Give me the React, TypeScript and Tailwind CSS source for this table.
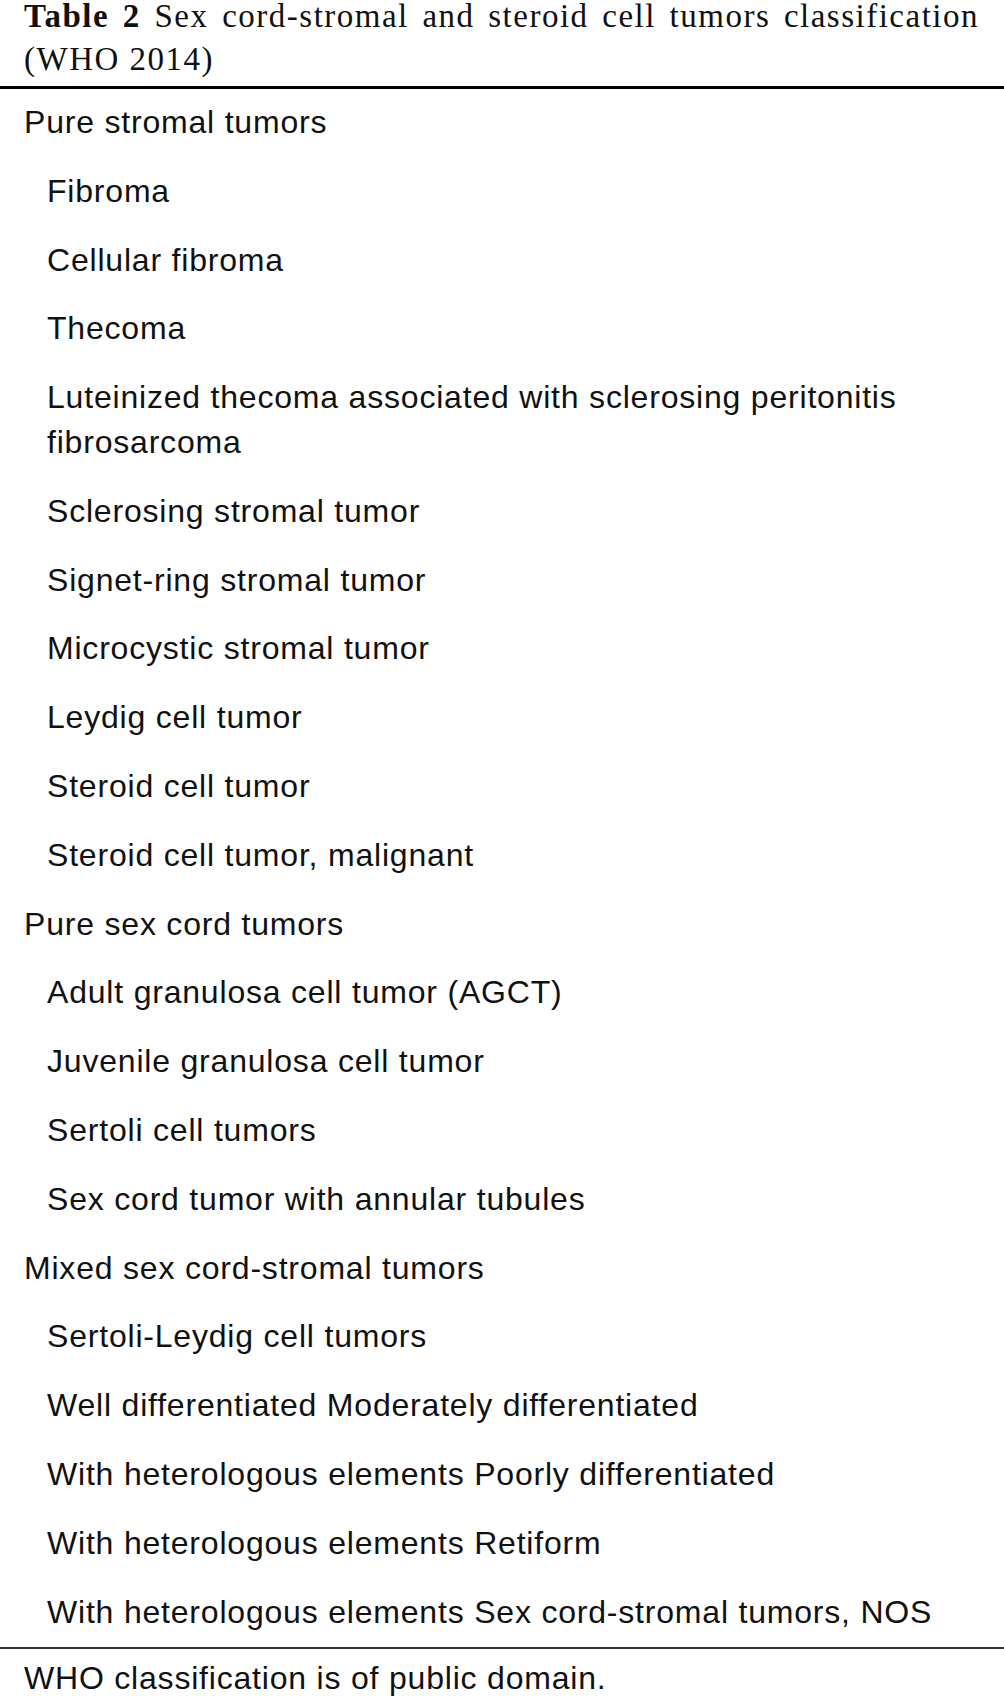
import React from "react";

type Row = { text: string; level: 0 | 1 };

const rows: Row[] = [
  { text: "Pure stromal tumors", level: 0 },
  { text: "Fibroma", level: 1 },
  { text: "Cellular fibroma", level: 1 },
  { text: "Thecoma", level: 1 },
  { text: "Luteinized thecoma associated with sclerosing peritonitis fibrosarcoma", level: 1 },
  { text: "Sclerosing stromal tumor", level: 1 },
  { text: "Signet-ring stromal tumor", level: 1 },
  { text: "Microcystic stromal tumor", level: 1 },
  { text: "Leydig cell tumor", level: 1 },
  { text: "Steroid cell tumor", level: 1 },
  { text: "Steroid cell tumor, malignant", level: 1 },
  { text: "Pure sex cord tumors", level: 0 },
  { text: "Adult granulosa cell tumor (AGCT)", level: 1 },
  { text: "Juvenile granulosa cell tumor", level: 1 },
  { text: "Sertoli cell tumors", level: 1 },
  { text: "Sex cord tumor with annular tubules", level: 1 },
  { text: "Mixed sex cord-stromal tumors", level: 0 },
  { text: "Sertoli-Leydig cell tumors", level: 1 },
  { text: "Well differentiated Moderately differentiated", level: 1 },
  { text: "With heterologous elements Poorly differentiated", level: 1 },
  { text: "With heterologous elements Retiform", level: 1 },
  { text: "With heterologous elements Sex cord-stromal tumors, NOS", level: 1 },
];

export default function App() {
  return (
    <div className="w-[1004px] h-[1698px] overflow-hidden bg-white text-[#111]">
      <div
        className="-mt-[5px] pb-[5px] pl-[24px] pr-[25px] text-[33px] leading-[43px] tracking-[1.5px] text-justify"
        style={{ fontFamily: '"Liberation Serif", "Times New Roman", serif' }}
      >
        <span className="font-bold">Table 2</span> Sex cord-stromal and steroid cell tumors classification (WHO 2014)
      </div>
      <div className="h-[3px] bg-black" />
      <div
        className="text-[32px] leading-[44.8px] tracking-[0.8px]"
        style={{ fontFamily: '"Liberation Sans", Arial, sans-serif' }}
      >
        {rows.map((r, i) => (
          <div
            key={i}
            className={
              r.level === 0
                ? "pt-[11px] pb-[13px] pl-[24px] pr-[20px]"
                : "pt-[11px] pb-[13px] pl-[47px] pr-[20px]"
            }
          >
            {r.text}
          </div>
        ))}
      </div>
      <div className="h-[2px] bg-[#333]" />
      <div
        className="pt-[12px] pl-[24px] text-[32px] leading-[35px] tracking-[0.8px]"
        style={{ fontFamily: '"Liberation Sans", Arial, sans-serif' }}
      >
        WHO classification is of public domain.
      </div>
    </div>
  );
}
